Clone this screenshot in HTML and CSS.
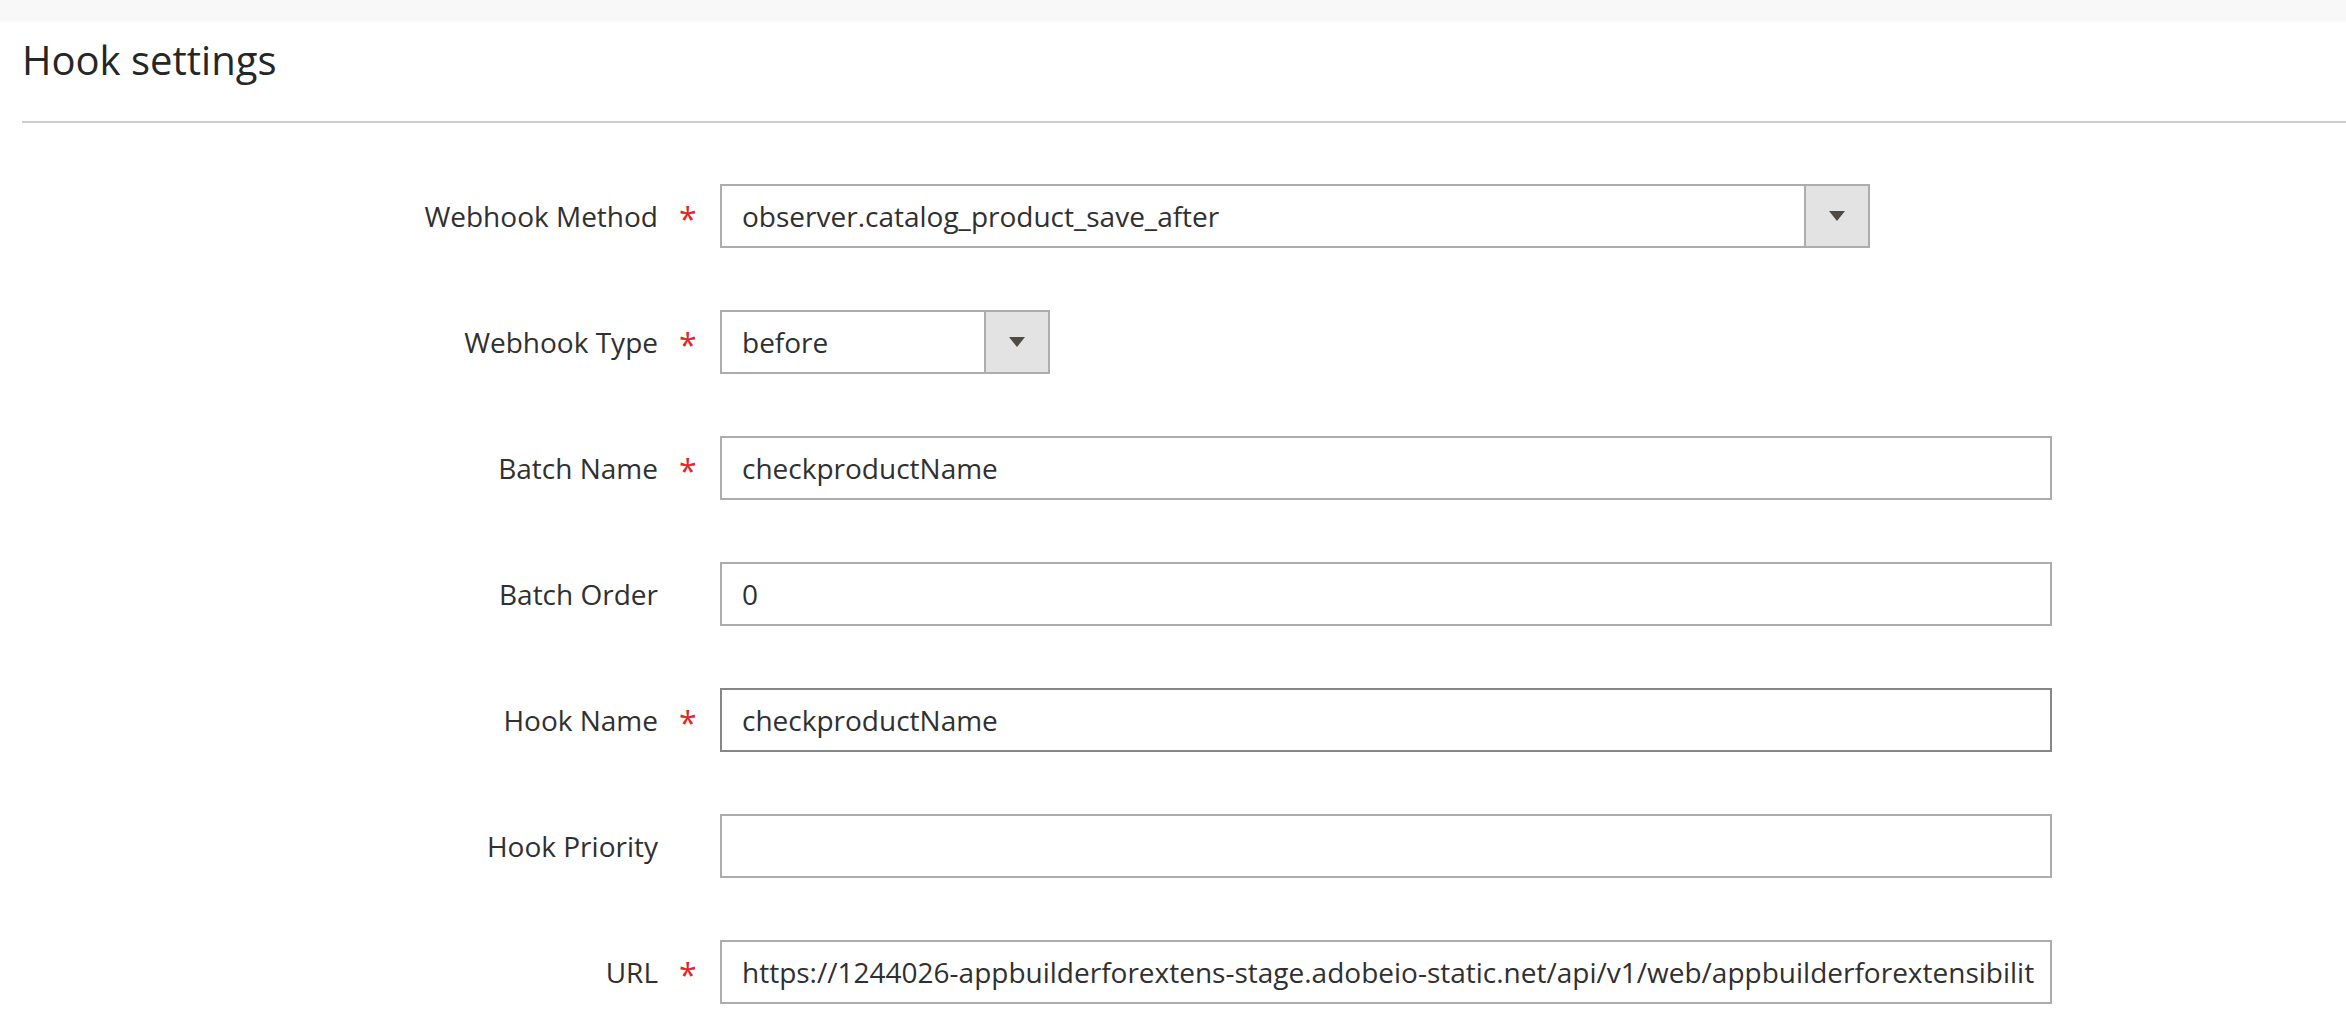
FILE: index.html
```html
<!DOCTYPE html>
<html lang="en">
<head>
<meta charset="utf-8">
<title>Hook settings</title>
<link rel="stylesheet" href="styles.css">
</head>
<body>
<div class="topbar"></div>
<section class="fieldset">
  <h2 class="legend">Hook settings</h2>
  <form class="form">
    <div class="field">
      <label class="field-label">Webhook Method</label>
      <span class="field-req">*</span>
      <div class="select select-wide">
        <span class="select-value">observer.catalog_product_save_after</span>
        <span class="select-btn"><svg width="16" height="10" viewBox="0 0 16 10"><polygon points="0,0 16,0 8,10" fill="#514943"/></svg></span>
      </div>
    </div>
    <div class="field">
      <label class="field-label">Webhook Type</label>
      <span class="field-req">*</span>
      <div class="select select-narrow">
        <span class="select-value">before</span>
        <span class="select-btn"><svg width="16" height="10" viewBox="0 0 16 10"><polygon points="0,0 16,0 8,10" fill="#514943"/></svg></span>
      </div>
    </div>
    <div class="field">
      <label class="field-label">Batch Name</label>
      <span class="field-req">*</span>
      <input class="input" type="text" value="checkproductName">
    </div>
    <div class="field">
      <label class="field-label">Batch Order</label>
      <span class="field-req"></span>
      <input class="input" type="text" value="0">
    </div>
    <div class="field">
      <label class="field-label">Hook Name</label>
      <span class="field-req">*</span>
      <input class="input input-active" type="text" value="checkproductName">
    </div>
    <div class="field">
      <label class="field-label">Hook Priority</label>
      <span class="field-req"></span>
      <input class="input" type="text" value="">
    </div>
    <div class="field">
      <label class="field-label">URL</label>
      <span class="field-req">*</span>
      <input class="input input-url" type="text" value="https://1244026-appbuilderforextens-stage.adobeio-static.net/api/v1/web/appbuilderforextensibilit">
    </div>
  </form>
</section>
</body>
</html>
```
FILE: styles.css
```css
html, body {
  margin: 0;
  padding: 0;
  background: #ffffff;
}
body {
  font-family: "Open Sans", "DejaVu Sans", sans-serif;
  color: #303030;
  overflow: hidden;
}
.topbar {
  height: 22px;
  background: #f8f8f8;
}
.legend {
  margin: 0 0 0 22px;
  padding: 14px 0 37px 0;
  font-size: 40px;
  line-height: 48px;
  font-weight: 400;
  color: #262626;
  border-bottom: 2px solid #cccccc;
}
.form {
  display: flex;
  flex-direction: column;
  gap: 62px;
  padding-top: 61px;
}
.field {
  display: grid;
  grid-template-columns: 658px 62px auto;
  align-items: center;
  height: 64px;
}
.field-label {
  text-align: right;
  font-size: 28px;
  color: #303030;
}
.field-req {
  align-self: start;
  padding-left: 21px;
  padding-top: 19px;
  font-size: 32px;
  line-height: 1;
  font-weight: 500;
  color: #e22626;
}
.input {
  box-sizing: border-box;
  width: 1332px;
  height: 64px;
  margin: 0;
  padding: 0 20px;
  border: 2px solid #adadad;
  border-radius: 0;
  background: #ffffff;
  font-family: "Open Sans", "DejaVu Sans", sans-serif;
  font-size: 28px;
  color: #303030;
  outline: none;
}
.input-url {
  padding-right: 14px;
}
.input-active {
  border-color: #878787;
}
.select {
  box-sizing: border-box;
  display: flex;
  height: 64px;
  border: 2px solid #adadad;
  background: #ffffff;
}
.select-wide {
  width: 1150px;
}
.select-narrow {
  width: 330px;
}
.select-value {
  flex: 1;
  padding-left: 20px;
  font-size: 28px;
  line-height: 60px;
  color: #303030;
  white-space: nowrap;
  overflow: hidden;
}
.select-btn {
  width: 62px;
  border-left: 2px solid #adadad;
  background: #e3e3e3;
  display: flex;
  align-items: center;
  justify-content: center;
}
.select-btn svg {
  display: block;
}
```
